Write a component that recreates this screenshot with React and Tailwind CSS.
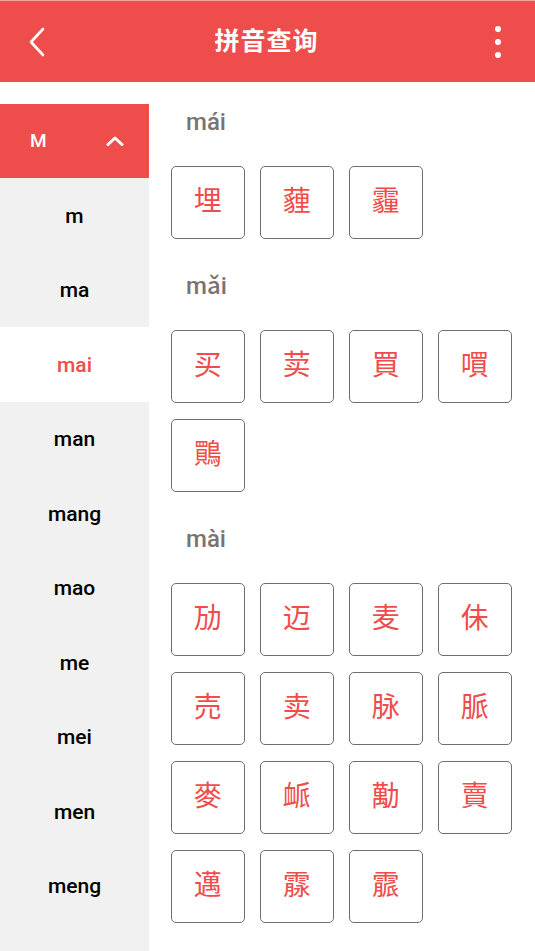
import React from 'react';

const letters = ['m', 'ma', 'mai', 'man', 'mang', 'mao', 'me', 'mei', 'men', 'meng', 'mi'];

const groups = [
  { py: 'mái', chars: ['埋', '薶', '霾'] },
  { py: 'mǎi', chars: ['买', '荬', '買', '嘪', '鷶'] },
  {
    py: 'mài',
    chars: ['劢', '迈', '麦', '佅', '売', '卖', '脉', '脈', '麥', '衇', '勱', '賣', '邁', '霡', '霢'],
  },
];

const font = { fontFamily: 'Roboto, "Noto Sans CJK SC", sans-serif' };

export default function App() {
  return (
    <div className="w-[535px] h-[951px] overflow-hidden bg-white flex flex-col" style={font}>
      {/* top bar */}
      <div className="h-[82px] shrink-0 bg-[#ef4d4b] border-t border-[#f4a3a1] flex items-center justify-between px-[26px]">
        <svg width="22" height="30" viewBox="0 0 22 30">
          <path d="M17 2 L5 15 L17 28" fill="none" stroke="white" strokeWidth="2.6" strokeLinecap="round" strokeLinejoin="round" />
        </svg>
        <div className="text-white text-[25px] font-bold tracking-[1px] mr-[2px]">拼音查询</div>
        <div className="flex flex-col gap-[7px] items-center w-[22px]">
          <span className="w-[6px] h-[6px] rounded-full bg-white" />
          <span className="w-[6px] h-[6px] rounded-full bg-white" />
          <span className="w-[6px] h-[6px] rounded-full bg-white" />
        </div>
      </div>

      <div className="flex flex-1 min-h-0">
        {/* index column */}
        <div className="w-[149px] shrink-0 pt-[21.5px] bg-white flex flex-col">
          <div className="h-[74.5px] shrink-0 bg-[#ef4d4b] flex items-center justify-between pl-[30px] pr-[25px]">
            <span className="text-white text-[19px] font-medium">M</span>
            <svg width="18" height="10" viewBox="0 0 18 10">
              <path d="M2 8.5 L9 2 L16 8.5" fill="none" stroke="white" strokeWidth="3" strokeLinecap="round" strokeLinejoin="round" />
            </svg>
          </div>
          <div className="flex-1 bg-[#f1f1f1]">
            {letters.map((l) => (
              <div
                key={l}
                className={`h-[74.5px] pt-[2px] flex items-center justify-center text-[21px] font-medium ${
                  l === 'mai' ? 'bg-white text-[#ef4d4b]' : 'text-black'
                }`}
              >
                {l}
              </div>
            ))}
          </div>
        </div>

        {/* characters */}
        <div className="flex-1 pt-[18px] pl-[22px] flex flex-col gap-[25px]">
          {groups.map((g) => (
            <div key={g.py}>
              <div className="h-[44px] flex items-center pl-[15px] text-[24px] font-medium text-[#7b7373]">{g.py}</div>
              <div className="mt-[21.5px] grid grid-cols-[repeat(4,73.5px)] gap-[15.5px]">
                {g.chars.map((c) => (
                  <div
                    key={c}
                    className="h-[73.5px] rounded-[5px] border-[1.5px] border-[#6e6e6e] flex items-center justify-center text-[28px] text-[#ef4d4b]"
                  >
                    {c}
                  </div>
                ))}
              </div>
            </div>
          ))}
        </div>
      </div>
    </div>
  );
}
